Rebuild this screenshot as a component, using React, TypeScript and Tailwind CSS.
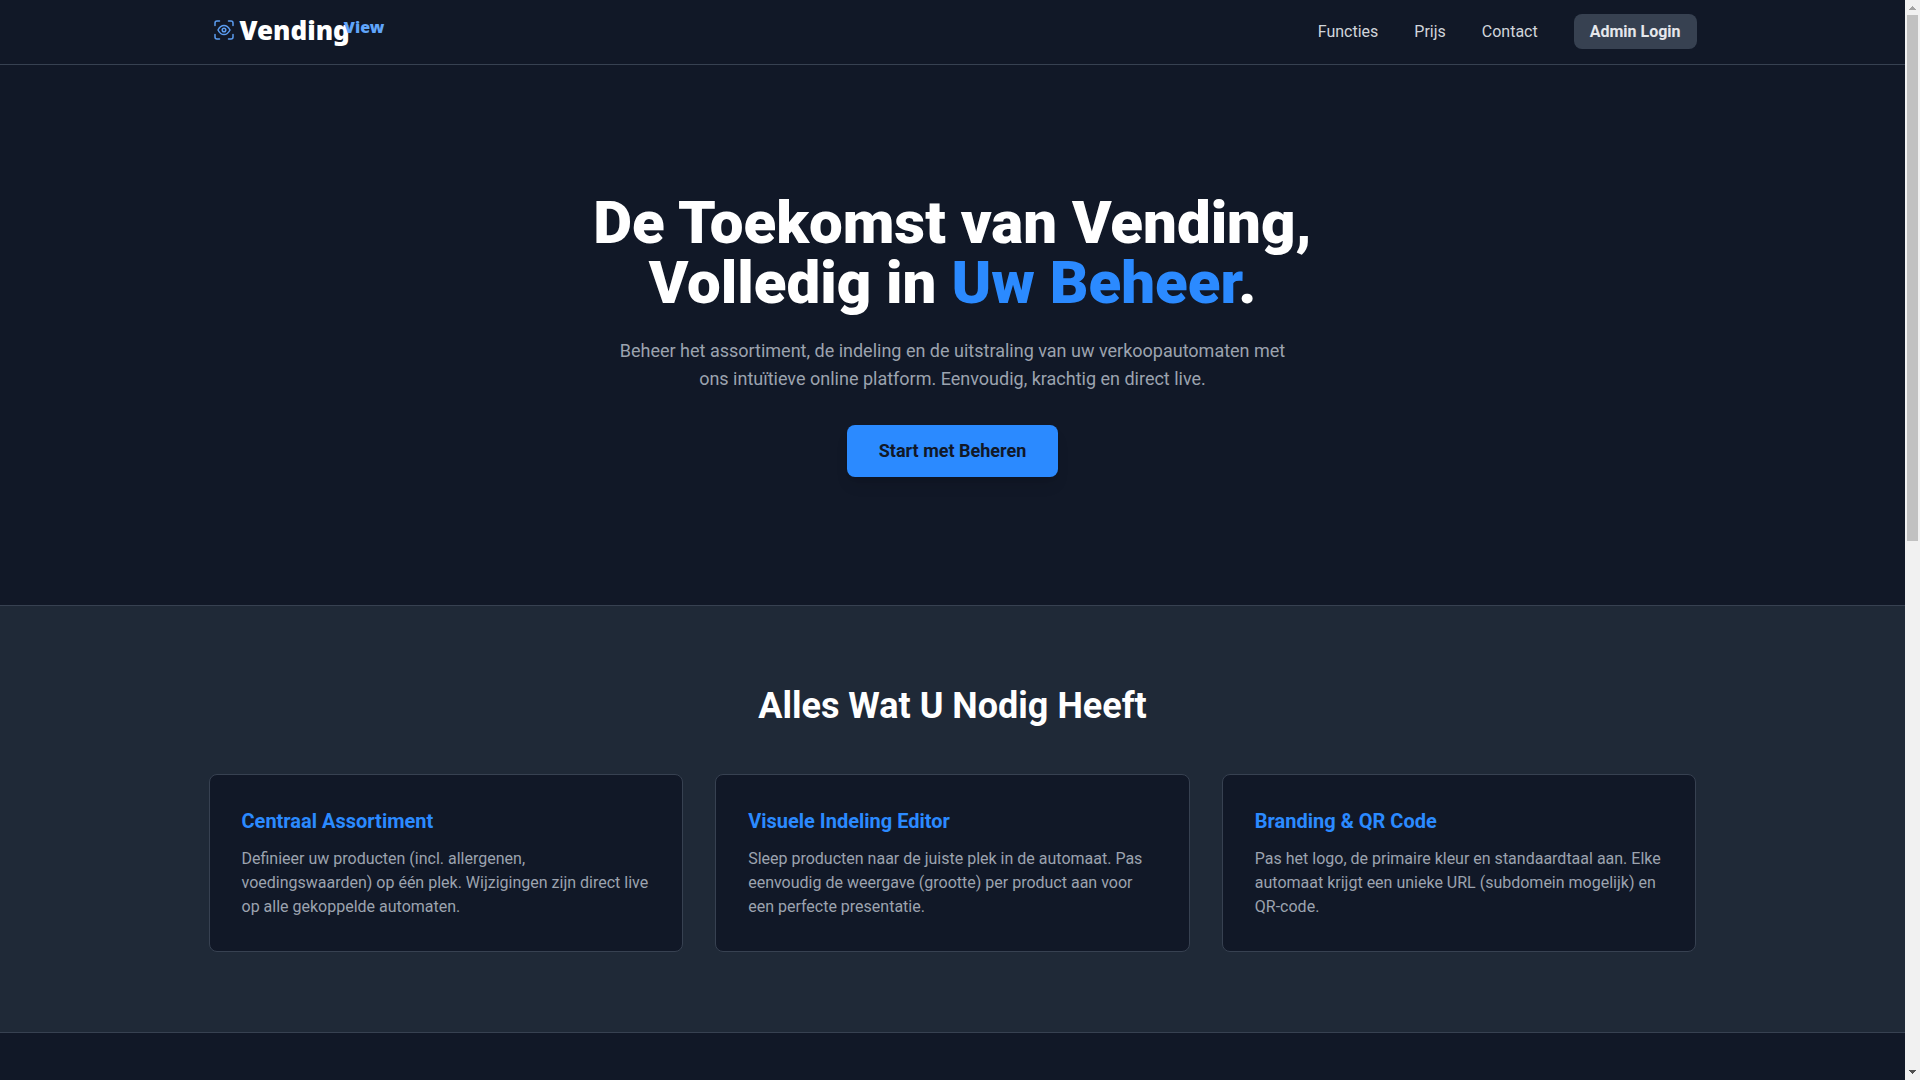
const NAV_LINKS = [
  { href: "#functies", label: "Functies" },
  { href: "#prijs", label: "Prijs" },
  { href: "#contact", label: "Contact" },
];

const FEATURES = [
  {
    title: "Centraal Assortiment",
    text: "Definieer uw producten (incl. allergenen, voedingswaarden) op één plek. Wijzigingen zijn direct live op alle gekoppelde automaten.",
  },
  {
    title: "Visuele Indeling Editor",
    text: "Sleep producten naar de juiste plek in de automaat. Pas eenvoudig de weergave (grootte) per product aan voor een perfecte presentatie.",
  },
  {
    title: "Branding & QR Code",
    text: "Pas het logo, de primaire kleur en standaardtaal aan. Elke automaat krijgt een unieke URL (subdomein mogelijk) en QR-code.",
  },
];

// Oog in een scankader
function ScanIcon() {
  return (
    <svg
      width="24"
      height="24"
      viewBox="0 0 24 24"
      fill="none"
      stroke="#5b9cf0"
      strokeWidth="1.5"
      strokeLinecap="round"
      strokeLinejoin="round"
      aria-hidden="true"
    >
      <path d="M3 7.5V5a2 2 0 0 1 2-2h2.500M16.500 3H19a2 2 0 0 1 2 2v2.500M21 16.500V19a2 2 0 0 1-2 2h-2.500M7.500 21H5a2 2 0 0 1-2-2v-2.500" />
      <path d="M6 12c1.500-3 3.600-4.600 6-4.600s4.500 1.600 6 4.600c-1.500 3-3.600 4.600-6 4.600S7.500 15 6 12z" />
      <circle cx="12" cy="12" r="1.800" />
    </svg>
  );
}

function Logo() {
  return (
    <a href="#" aria-label="VendingView" className="flex items-center pl-[3px] pb-1 font-['Noto_Sans',sans-serif]">
      <ScanIcon />
      <span className="ml-1 text-[26px] leading-9 font-black text-white">Vending</span>
      <span className="-ml-1.5 self-start text-base leading-[30px] font-black text-[#60a5fa]">View</span>
    </a>
  );
}

function Header() {
  return (
    <header className="border-b border-[#374151]">
      <div className="max-w-screen-2xl mx-auto px-6 h-16 flex items-center justify-between">
        <Logo />
        <nav>
          {NAV_LINKS.map((link) => (
            <span key={link.href}>
              <a href={link.href} className="mr-8 text-[#d1d5db] hover:text-white">
                {link.label}
              </a>{" "}
            </span>
          ))}
          <a
            href="#login"
            className="bg-[#374151] hover:bg-[#4b5563] text-[#e5e7eb] font-bold px-4 py-2 rounded-lg"
          >
            Admin Login
          </a>
        </nav>
      </div>
    </header>
  );
}

function Hero() {
  return (
    <section className="px-6 py-32 flex flex-col items-center text-center">
      <h1 className="text-6xl font-black text-white">
        De Toekomst van Vending,
        <br />
        Volledig in <span className="text-[#2b8aff]">Uw Beheer</span>.
      </h1>
      <p className="mt-6 max-w-2xl text-lg leading-7 text-[#9ca3af]">
        Beheer het assortiment, de indeling en de uitstraling van uw verkoopautomaten met ons
        intuïtieve online platform. Eenvoudig, krachtig en direct live.
      </p>
      <a
        href="#login"
        className="mt-8 px-8 py-3 rounded-lg bg-[#2b8aff] text-lg leading-7 font-bold text-[#111827] shadow-lg"
      >
        Start met Beheren
      </a>
    </section>
  );
}

function Features() {
  return (
    <section id="functies" className="bg-[#1f2937] border-y border-[#374151] py-20">
      <div className="max-w-screen-2xl mx-auto px-6">
        <h2 className="text-4xl font-bold text-white text-center mb-12">Alles Wat U Nodig Heeft</h2>
        <div className="grid md:grid-cols-3 gap-8">
          {FEATURES.map((feature) => (
            <div key={feature.title} className="bg-[#111827] border border-[#374151] rounded-lg p-8">
              <h3 className="text-xl font-bold text-[#2b8aff] mb-3">{feature.title}</h3>
              <p className="text-[#9ca3af]">{feature.text}</p>
            </div>
          ))}
        </div>
      </div>
    </section>
  );
}

// Schuifbalk aan de rechterkant van het venster
function ScrollTrack() {
  return (
    <div className="w-[15px] shrink-0 bg-[#f1f1f1] flex flex-col items-center" aria-hidden="true">
      <svg width="15" height="15" viewBox="0 0 15 15" className="shrink-0" shapeRendering="crispEdges">
        <path d="M4 10h7v-1h-1v-1h-1v-1h-1v-1h-1v1h-1v1h-1v1h-1z" fill="#a3a3a3" />
      </svg>
      <div className="w-[11px] h-[526px] bg-[#c1c1c1]" />
      <svg width="15" height="15" viewBox="0 0 15 15" className="shrink-0 mt-auto" shapeRendering="crispEdges">
        <path d="M4 5h7v1h-1v1h-1v1h-1v1h-1v-1h-1v-1h-1v-1h-1z" fill="#505050" />
      </svg>
    </div>
  );
}

export default function App() {
  return (
    <div className="h-screen flex overflow-hidden bg-[#111827] font-[Roboto,sans-serif]">
      <div className="flex-1 min-w-0 overflow-hidden">
        <Header />
        <main>
          <Hero />
          <Features />
        </main>
      </div>
      <ScrollTrack />
    </div>
  );
}
